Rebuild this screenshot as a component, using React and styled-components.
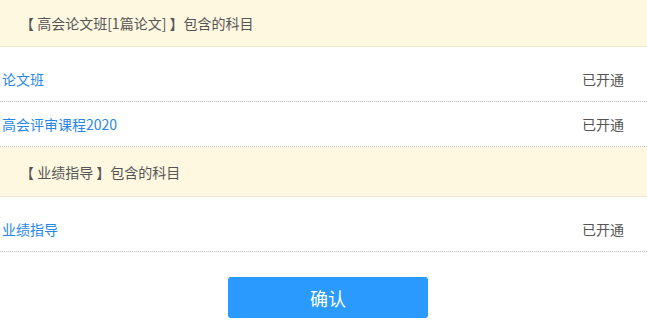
import React from "react";
import styled, { createGlobalStyle } from "styled-components";

const Global = createGlobalStyle`
  html, body { margin: 0; padding: 0; background: #fff; }
  body { font-family: "Noto Sans CJK SC", "Microsoft YaHei", sans-serif; }
`;

const Page = styled.div`
  width: 647px;
`;

const SectionHeader = styled.div`
  height: ${(p) => p.$h}px;
  display: flex;
  align-items: center;
  padding-left: 20px;
  background: #fff8e1;
  border-bottom: 1px solid #f3e6cc;
  font-size: 14px;
  color: #555;
`;

const List = styled.div`
  padding-top: 10px;
`;

const Row = styled.div`
  height: 44px;
  display: flex;
  align-items: center;
  justify-content: space-between;
  padding: 0 23px 0 2px;
  border-bottom: 1px dotted #bdbdbd;
  font-size: 14px;
`;

const Name = styled.span`
  color: #2787e8;
`;

const Status = styled.span`
  color: #555;
`;

const Footer = styled.div`
  display: flex;
  justify-content: center;
  padding: 25px 0 0 9px;
`;

const Confirm = styled.button`
  width: 200px;
  height: 41px;
  border: none;
  border-radius: 3px;
  background: #2a9afe;
  color: #fff;
  font-family: inherit;
  font-size: 18px;
  cursor: pointer;
`;

const sections = [
  {
    title: "【 高会论文班[1篇论文] 】包含的科目",
    h: 46,
    items: ["论文班", "高会评审课程2020"],
  },
  {
    title: "【 业绩指导 】包含的科目",
    h: 49,
    items: ["业绩指导"],
  },
];

export default function App() {
  return (
    <>
      <Global />
      <Page>
        {sections.map((s) => (
          <React.Fragment key={s.title}>
            <SectionHeader $h={s.h}>{s.title}</SectionHeader>
            <List>
              {s.items.map((it) => (
                <Row key={it}>
                  <Name>{it}</Name>
                  <Status>已开通</Status>
                </Row>
              ))}
            </List>
          </React.Fragment>
        ))}
        <Footer>
          <Confirm>确认</Confirm>
        </Footer>
      </Page>
    </>
  );
}
